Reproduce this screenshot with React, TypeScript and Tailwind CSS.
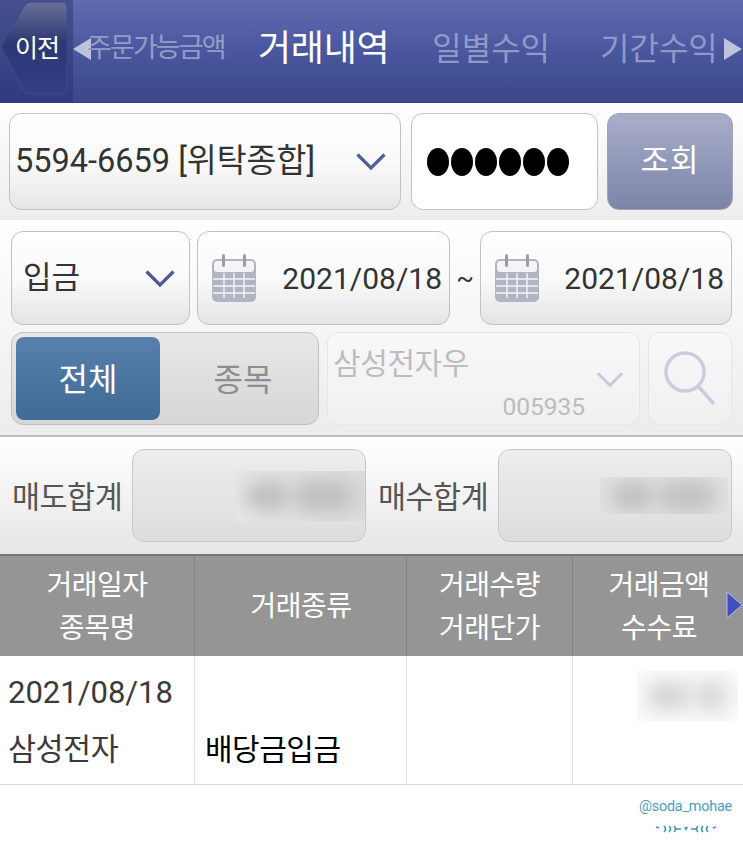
import React from "react";

const FONT = { fontFamily: 'Roboto, "Noto Sans CJK KR", sans-serif' };

function Chevron({ className }: { className: string }) {
  return (
    <svg viewBox="0 0 30 20" className={className} fill="none" stroke="currentColor" strokeWidth="3.2">
      <path d="M1.5 2.5 L15 16 L28.5 2.5" />
    </svg>
  );
}

function Calendar() {
  return (
    <svg viewBox="0 0 46 50" className="w-[46px] h-[50px] shrink-0">
      <rect x="1" y="6" width="44" height="43" rx="5" fill="#b1b4c3" />
      <rect x="3" y="8" width="40" height="11" rx="3" fill="#f4f4f6" />
      <rect x="11" y="1" width="3" height="13" rx="1.5" fill="#9a9db0" />
      <rect x="32" y="1" width="3" height="13" rx="1.5" fill="#9a9db0" />
      <path d="M2 26H44M2 33H44M2 40H44M13 20V45M23 20V45M33 20V45" stroke="#f5f5f7" strokeWidth="1.4" />
    </svg>
  );
}

function DateBox({ width }: { width: string }) {
  return (
    <div className={`${width} h-[94px] flex items-center justify-between pl-[13px] pr-[7px] rounded-xl border border-[#c2c2c2] bg-gradient-to-b from-white via-[#fafafa] to-[#e4e4e4]`}>
      <Calendar />
      <span className="text-[30px] text-[#333]">2021/08/18</span>
    </div>
  );
}

function Blur({ className, blob }: { className: string; blob: string }) {
  return (
    <div className={`${className} flex items-center gap-[2px] px-[10px] overflow-hidden`}>
      <div className={`w-[44px] h-[30px] rounded-full ${blob} blur-[9px]`} />
      <div className={`flex-1 h-[32px] rounded-full ${blob} blur-[10px]`} />
    </div>
  );
}

function HeadCell({ width, lines, className }: { width: string; lines: string[]; className: string }) {
  return (
    <div className={`${width} h-full pt-[2px] flex flex-col justify-center items-center gap-[9px] text-[28px] leading-[34px] text-white ${className}`}>
      {lines.map((l) => (
        <span key={l} className="tracking-[-0.5px]">{l}</span>
      ))}
    </div>
  );
}

export default function App() {
  return (
    <div className="w-[743px] h-[863px] bg-white overflow-hidden" style={FONT}>
      {/* top nav */}
      <header className="h-[103px] flex items-center border-b border-[#34417f] bg-gradient-to-b from-[#5f6ab0] via-[#4a579e] to-[#3a4889]">
        <div className="relative w-[73px] h-full shrink-0 flex items-center justify-end pr-[14px] pb-[6px] bg-gradient-to-b from-[#46508f] to-[#2f3b7f]">
          <svg viewBox="0 0 73 102" className="absolute inset-0 w-[73px] h-[102px]">
            <defs>
              <linearGradient id="back" x1="0" y1="0" x2="0" y2="1">
                <stop offset="0" stopColor="#6a7098" />
                <stop offset="0.45" stopColor="#2c3773" />
                <stop offset="1" stopColor="#333f85" />
              </linearGradient>
            </defs>
            <path d="M1 47 L25 5 Q27 2 31 2 H62 Q67 2 67 8 V88 Q67 94 62 94 H31 Q27 94 24 91 Z" fill="url(#back)" stroke="#3f4a8e" />
          </svg>
          <span className="relative text-[25px] leading-none text-white tracking-[-1px]">이전</span>
        </div>
        <div className="flex-1 flex items-center pb-[5px]">
          <svg viewBox="0 0 18 22" className="w-[18px] h-[22px] shrink-0 text-[#bcc3dd]" fill="currentColor">
            <path d="M0 11 L18 0 V22 Z" />
          </svg>
          <span className="w-[152px] ml-[-4px] text-[27px] tracking-[-1.9px] text-[#939dc9] whitespace-nowrap">주문가능금액</span>
          <span className="ml-[19px] text-[36px] tracking-[-0.3px] text-white whitespace-nowrap">거래내역</span>
          <span className="ml-[43px] text-[32px] text-[#8f9ac6] whitespace-nowrap">일별수익</span>
          <span className="ml-[50px] text-[32px] text-[#8f9ac6] whitespace-nowrap">기간수익</span>
          <svg viewBox="0 0 18 22" className="w-[18px] h-[22px] ml-[6px] shrink-0 text-[#bcc3dd]" fill="currentColor">
            <path d="M0 0 L18 11 L0 22 Z" />
          </svg>
        </div>
      </header>

      {/* account row */}
      <section className="h-[117px] pt-[10px] pl-[9px] pr-[10px] flex bg-gradient-to-b from-white to-[#ededed]">
        <div className="w-[392px] h-[97px] flex items-center justify-between pl-[5px] pr-[14px] rounded-xl border border-[#c2c2c2] bg-gradient-to-b from-white via-[#fafafa] to-[#e6e6e6]">
          <span className="text-[32.5px] text-[#333] whitespace-nowrap">5594-6659 [위탁종합]</span>
          <Chevron className="w-[30px] h-[20px] text-[#4f5f9e]" />
        </div>
        <div className="w-[187px] h-[97px] ml-[10px] flex items-center gap-[2px] pl-[15px] rounded-xl border border-[#c2c2c2] bg-white">
          {[0, 1, 2, 3, 4, 5].map((i) => (
            <div key={i} className="w-[22px] h-[28px] rounded-[50%] bg-black" />
          ))}
        </div>
        <div className="w-[126px] h-[97px] ml-[9px] flex items-center justify-center rounded-xl border border-[#9ea3bd] bg-gradient-to-b from-[#a8aeca] to-[#7c84a8] text-[31px] text-white tracking-[1px]">
          조회
        </div>
      </section>

      {/* filter rows */}
      <section className="h-[217px] pt-[11px] pl-[11px] pr-[10px] flex flex-col gap-[7px] border-b-2 border-[#bdbdbd] bg-gradient-to-b from-white to-[#ececec]">
        <div className="flex items-center">
          <div className="w-[179px] h-[94px] pt-[1px] flex items-center justify-between pl-[11px] pr-[14px] rounded-xl border border-[#c2c2c2] bg-gradient-to-b from-white via-[#fafafa] to-[#e4e4e4]">
            <span className="text-[31px] text-[#333]">입금</span>
            <Chevron className="w-[30px] h-[20px] text-[#4a5a9c]" />
          </div>
          <div className="w-[7px]" />
          <DateBox width="w-[253px]" />
          <span className="w-[30px] text-center text-[26px] text-[#333]">~</span>
          <DateBox width="w-[252px]" />
        </div>
        <div className="flex">
          <div className="w-[308px] h-[93px] p-[4px] flex rounded-xl border border-[#c0c0c0] bg-gradient-to-b from-[#e8e8e8] to-[#d6d6d6]">
            <div className="w-[144px] h-full pt-[2px] flex items-center justify-center rounded-lg bg-gradient-to-b from-[#5880ad] to-[#3f6b96] text-[32px] text-white">전체</div>
            <div className="flex-1 pl-[12px] pt-[2px] flex items-center justify-center text-[32px] text-[#8e8e8e]">종목</div>
          </div>
          <div className="w-[313px] h-[93px] ml-[8px] pl-[5px] pr-[14px] pt-[9px] flex justify-between rounded-xl border border-[#e6e6e6] bg-gradient-to-b from-[#f8f8f8] to-[#f0f0f0]">
            <span className="text-[30px] leading-[44px] text-[#bdbdbd] tracking-[-0.4px] whitespace-nowrap">삼성전자우</span>
            <div className="flex flex-col items-end pt-[29px]">
              <Chevron className="w-[30px] h-[18px] text-[#c6cbdc]" />
              <span className="mt-[4px] mr-[40px] text-[24.5px] leading-[28px] text-[#bcbcbc]">005935</span>
            </div>
          </div>
          <div className="w-[84px] h-[93px] ml-[8px] flex items-center justify-center rounded-xl border border-[#e6e6e6] bg-gradient-to-b from-[#f8f8f8] to-[#f0f0f0]">
            <svg viewBox="0 0 54 58" className="w-[54px] h-[58px]" fill="none" stroke="#c7cddf" strokeWidth="3.4">
              <circle cx="22" cy="22" r="19" />
              <path d="M35 36 L51 54" />
            </svg>
          </div>
        </div>
      </section>

      {/* totals */}
      <section className="h-[119px] pl-[12px] pr-[11px] flex items-center border-b-2 border-[#777] bg-gradient-to-b from-white to-[#e6e6e6]">
        <span className="w-[120px] pt-[5px] text-[30.5px] text-[#555] tracking-[-0.5px] whitespace-nowrap">매도합계</span>
        <div className="w-[234px] h-[93px] flex items-center justify-end rounded-xl border border-[#c8c8c8] bg-gradient-to-b from-[#ededed] to-[#dddddd]">
          <Blur className="w-[129px] h-[50px] bg-gradient-to-r from-[#e6e6e6] to-[#dcdcdc]" blob="bg-[#bfbfbf]" />
        </div>
        <span className="w-[132px] pl-[12px] pt-[5px] text-[30.5px] text-[#555] tracking-[-0.5px] whitespace-nowrap">매수합계</span>
        <div className="w-[234px] h-[93px] flex items-center justify-end pr-[3px] rounded-xl border border-[#c8c8c8] bg-gradient-to-b from-[#ededed] to-[#dddddd]">
          <Blur className="w-[128px] h-[37px] bg-[#e2e2e2]" blob="bg-[#c2c2c2]" />
        </div>
      </section>

      {/* table head */}
      <div className="relative h-[100px] flex bg-[#959595]">
        <HeadCell width="w-[195px]" lines={["거래일자", "종목명"]} className="border-r border-[#838383]" />
        <HeadCell width="w-[212px]" lines={["거래종류"]} className="pl-[1px] border-r border-[#838383]" />
        <HeadCell width="w-[166px]" lines={["거래수량", "거래단가"]} className="border-r border-[#838383]" />
        <HeadCell width="w-[170px]" lines={["거래금액", "수수료"]} className="pl-[2px]" />
        <svg viewBox="0 0 17 28" className="absolute right-0 top-[35px] w-[17px] h-[28px]">
          <path d="M1 1 L16 14 L1 27 Z" fill="#3f4fc0" stroke="#b5b9dc" strokeWidth="1" />
        </svg>
      </div>

      {/* table row */}
      <div className="h-[129px] flex border-b border-[#d9d9d9] bg-white">
        <div className="w-[195px] h-full flex flex-col pl-[8px] pt-[17px] gap-[17px] border-r border-[#e2e2e2] text-[#3a3a3a]">
          <span className="text-[31px] leading-[40px]">2021/08/18</span>
          <span className="text-[30.5px] leading-[40px] tracking-[-0.5px]">삼성전자</span>
        </div>
        <div className="w-[212px] h-full flex items-end pl-[10px] pb-[14px] border-r border-[#e2e2e2] text-[30px] leading-[40px] text-black tracking-[-0.5px]">
          배당금입금
        </div>
        <div className="w-[166px] h-full border-r border-[#e2e2e2]" />
        <div className="w-[170px] h-full flex justify-end pt-[15px] pr-[5px]">
          <Blur className="w-[101px] h-[50px] bg-[#fafafa]" blob="bg-[#d6d6d6]" />
        </div>
      </div>

      {/* watermark */}
      <div className="flex flex-col items-end pr-[11px] pt-[13px]">
        <span className="text-[14.4px] leading-[18px] text-[#4a9cc4] tracking-[-0.2px]">@soda_mohae</span>
        <svg viewBox="0 0 62 10" className="w-[62px] h-[10px] mt-[8px] mr-[15px]" fill="none" stroke="#3f97bf" strokeWidth="1.6">
          <path d="M1 3 L4 4M9 2 Q12 5 9 8M14 2 Q17 5 14 8M19 2 Q22 5 19 8M21 5 H26M53 2 Q50 5 53 8M48 2 Q45 5 48 8M43 2 Q40 5 43 8M41 5 H36M58 4 L61 3" />
          <path d="M29 3 L33 3 L31 7 Z" fill="#3f97bf" stroke="none" />
        </svg>
      </div>
    </div>
  );
}
